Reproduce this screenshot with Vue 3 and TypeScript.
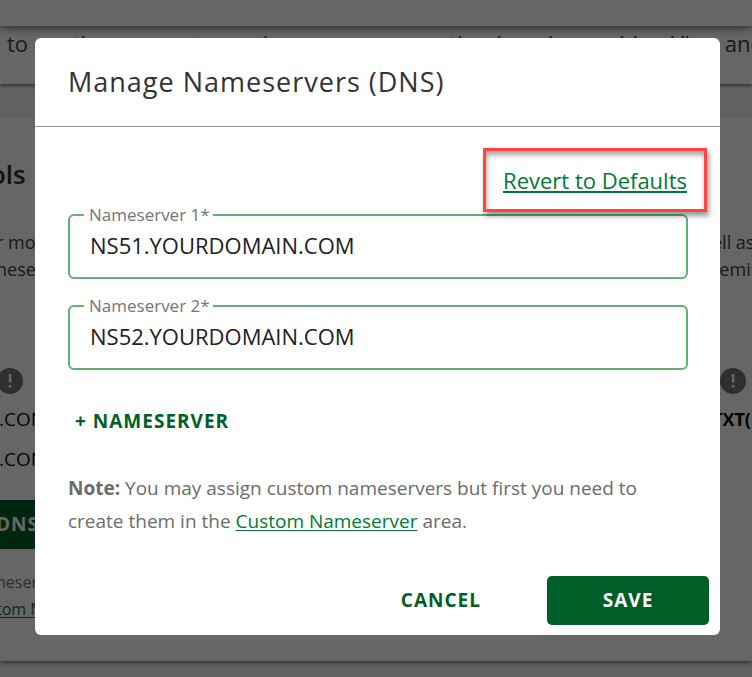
<script setup lang="ts">
import { ref } from 'vue'

interface Nameserver {
  id: number
  host: string
}

const open = ref(true)

const nameservers = ref<Nameserver[]>([
  { id: 1, host: 'NS51.YOURDOMAIN.COM' },
  { id: 2, host: 'NS52.YOURDOMAIN.COM' },
])

function addNameserver(): void {
  nameservers.value.push({ id: nameservers.value.length + 1, host: '' })
}

function close(): void {
  open.value = false
}
</script>

<template>
  <div class="page">
    <div class="topbar"></div>
    <section class="intro">
      <p>to another account, see the owner can use the domain provider. View and</p>
    </section>

    <section class="tools">
      <div class="column">
        <h2>ols</h2>
        <p class="about">r more<br />neservers</p>
        <svg class="info" viewBox="0 0 26 26" aria-hidden="true">
          <circle cx="13" cy="13" r="13" fill="#757575" />
          <path d="M11.8 6h2.6v8.4h-2.6zM11.8 17h2.6v2.6h-2.6z" fill="#fff" />
        </svg>
        <p class="record">.COM</p>
        <p class="record">.COM</p>
        <button class="dns" type="button">DNS</button>
        <p class="hint">neserver<br /><a href="#custom">tom N</a></p>
      </div>
      <div class="column side">
        <h2>&nbsp;</h2>
        <p class="about">ell as<br />remium</p>
        <svg class="info" viewBox="0 0 26 26" aria-hidden="true">
          <circle cx="13" cy="13" r="13" fill="#757575" />
          <path d="M11.8 6h2.6v8.4h-2.6zM11.8 17h2.6v2.6h-2.6z" fill="#fff" />
        </svg>
        <p class="record strong">TXT(</p>
      </div>
    </section>

    <div v-if="open" class="backdrop">
      <form class="dialog" role="dialog" aria-labelledby="dialog-title" @submit.prevent="close">
        <header class="head">
          <h1 id="dialog-title">Manage Nameservers (DNS)</h1>
        </header>
        <div class="body">
          <div class="revert">
            <a href="#defaults">Revert to Defaults</a>
          </div>
          <div class="fields">
            <fieldset v-for="ns in nameservers" :key="ns.id" class="field">
              <legend><label :for="`ns-${ns.id}`">Nameserver {{ ns.id }}*</label></legend>
              <input :id="`ns-${ns.id}`" v-model="ns.host" type="text" spellcheck="false" />
            </fieldset>
          </div>
          <button class="add" type="button" @click="addNameserver">+ NAMESERVER</button>
          <p class="note">
            <b>Note:</b> You may assign custom nameservers but first you need to create them in the
            <a href="#custom-nameserver">Custom Nameserver</a> area.
          </p>
        </div>
        <footer class="foot">
          <button class="cancel" type="button" @click="close">CANCEL</button>
          <button class="save" type="submit">SAVE</button>
        </footer>
      </form>
    </div>
  </div>
</template>

<style>
body {
  margin: 0;
  background: #f8f8f8;
}
</style>

<style scoped>
* {
  box-sizing: border-box;
}

h1,
h2,
p {
  margin: 0;
}

.page {
  position: relative;
  min-height: 100vh;
  overflow: hidden;
  background: #f8f8f8;
  font-family: 'Open Sans', 'Liberation Sans', sans-serif;
  color: #424242;
}

.topbar {
  position: relative;
  height: 26px;
  background: #fff;
  box-shadow: 0 2px 8px rgba(0, 0, 0, 0.6);
}

.intro {
  height: 58px;
  padding: 0 7px;
  background: #fff;
  box-shadow: 0 1px 4px rgba(0, 0, 0, 0.7);
  font-size: 22px;
  line-height: 34px;
  white-space: nowrap;
}

.tools {
  display: grid;
  grid-template-columns: 1fr 36px;
  height: 544px;
  margin-top: 33px;
  padding-top: 40px;
  background: #fff;
  box-shadow: 0 2px 4px rgba(0, 0, 0, 0.5);
  white-space: nowrap;
}

.column {
  display: flex;
  flex-direction: column;
  align-items: flex-start;
  margin-left: -4px;
}

.column h2 {
  margin-left: -6px;
  font-size: 26px;
  line-height: 34px;
  font-weight: 600;
  color: #333;
}

.about {
  margin-top: 38px;
  font-size: 18px;
  line-height: 27px;
}

.info {
  width: 26px;
  height: 26px;
  margin: 85px 0 12px 1px;
}

.side .info {
  margin-left: 8px;
}

.record {
  margin-bottom: 13px;
  padding-left: 3px;
  font-size: 19px;
  line-height: 27px;
  color: #111;
}

.record.strong {
  padding-left: 0;
  font-weight: 700;
  font-size: 18px;
  color: #000;
}

.dns {
  height: 49px;
  margin: 14px 0 20px;
  padding: 0 40px 2px 0;
  border: 0;
  background: #005f26;
  color: #fff;
  font: 700 19px 'Open Sans', sans-serif;
  letter-spacing: 1px;
}

.hint {
  font-size: 16px;
  line-height: 27px;
  color: #757575;
}

a {
  color: #007a33;
  text-underline-offset: 2px;
}

.backdrop {
  position: absolute;
  inset: 0;
  padding: 38px 32px 42px 35px;
  background: rgba(0, 0, 0, 0.6);
}

.dialog {
  border-radius: 6px;
  background: #fff;
}

.head {
  padding: 24px 33px;
  border-bottom: 1px solid #949494;
}

.head h1 {
  font-size: 27px;
  line-height: 40px;
  font-weight: 500;
  letter-spacing: 1px;
  color: #333;
}

.body {
  display: flex;
  flex-direction: column;
  align-items: flex-start;
  padding: 21px 32px 0 33px;
}

.revert {
  position: relative;
  align-self: flex-end;
  margin-right: -19px;
  padding: 14px 17px;
  border: 3px solid #ff4444;
  box-shadow:
    2px 4px 5px rgba(0, 0, 0, 0.4),
    inset 1px 4px 5px rgba(0, 0, 0, 0.35);
  font-size: 22px;
  line-height: 30px;
}

.revert a {
  text-decoration-thickness: 2px;
}

.fields {
  display: flex;
  flex-direction: column;
  gap: 26px;
  align-self: stretch;
  margin-top: 2px;
}

.field {
  min-width: 0;
  height: 65px;
  margin: 0;
  padding: 0 14px;
  border: 2px solid #60b077;
  border-radius: 6px;
}

.field legend {
  padding: 0 3px 0 5px;
  font-size: 17px;
  line-height: 2px;
  color: #757575;
}

.field input {
  display: block;
  width: 100%;
  height: 58px;
  padding: 0 6px;
  border: 0;
  outline: 0;
  background: transparent;
  font: 22px 'Open Sans', sans-serif;
  color: #212121;
}

.add,
.cancel,
.save {
  border: 0;
  border-radius: 5px;
  background: transparent;
  color: #005f26;
  font: 700 19px 'Open Sans', sans-serif;
  letter-spacing: 1px;
  cursor: pointer;
}

.add {
  height: 48px;
  margin-top: 27px;
  padding: 0 7px;
}

.note {
  margin-top: 27px;
  font-size: 19px;
  line-height: 33px;
  color: #6b6b6b;
}

.foot {
  display: flex;
  justify-content: flex-end;
  gap: 26px;
  padding: 38px 11px 10px;
}

.cancel {
  height: 49px;
  padding: 0 40px 2px;
}

.save {
  width: 162px;
  height: 49px;
  padding: 0 0 2px;
  background: #005f26;
  color: #fff;
}
</style>
